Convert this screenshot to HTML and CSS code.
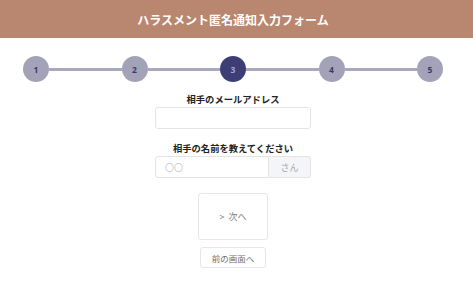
FILE: index.html
```html
<!DOCTYPE html>
<html lang="ja">
<head>
  <meta charset="UTF-8" />
  <meta name="viewport" content="width=device-width, initial-scale=1.0"/>
  <title>ハラスメント匿名通知入力フォーム</title>
  <link rel="stylesheet" href="styles.css">
</head>
<body>

  <header class="site-header">
    <h1>ハラスメント匿名通知入力フォーム</h1>
  </header>

  <main class="page">
    <ol class="steps">
      <li class="step">1</li>
      <li class="bar"></li>
      <li class="step">2</li>
      <li class="bar"></li>
      <li class="step active">3</li>
      <li class="bar"></li>
      <li class="step">4</li>
      <li class="bar"></li>
      <li class="step">5</li>
    </ol>

    <form class="notice-form" onsubmit="return false">
      <div class="form-group">
        <label for="mail">相手のメールアドレス</label>
        <input type="text" id="mail" name="mail" />
      </div>

      <div class="form-group">
        <label for="name">相手の名前を教えてください</label>
        <div class="input-group">
          <input type="text" id="name" name="name" placeholder="〇〇" />
          <span class="addon">さん</span>
        </div>
      </div>

      <button type="submit" class="next-btn"><span class="chev">&gt;</span>次へ</button>
      <button type="button" class="back-btn">前の画面へ</button>
    </form>
  </main>

</body>
</html>
```

FILE: styles.css
```css
body {
  margin: 0;
  font-family: "Noto Sans CJK JP", "Noto Sans", sans-serif;
  background: #ffffff;
  color: #333;
}

.site-header {
  background: #b98770;
  height: 38px;
  display: flex;
  align-items: center;
  justify-content: center;
  padding-right: 7px;
}

.site-header h1 {
  margin: 0;
  color: #ffffff;
  font-size: 12px;
  font-weight: bold;
}

.page {
  padding-right: 7px;
}

/* ステップ表示 */
.steps {
  list-style: none;
  margin: 18px auto 0;
  padding: 0;
  width: 420px;
  display: flex;
  align-items: center;
}

.step {
  width: 26px;
  height: 26px;
  border-radius: 50%;
  background: #a4a2b9;
  color: #3a3a68;
  font-family: "Open Sans", sans-serif;
  font-size: 8.5px;
  font-weight: bold;
  display: flex;
  align-items: center;
  justify-content: center;
  flex-shrink: 0;
}

.step.active {
  background: #3e3e77;
  color: #a3a3cf;
}

.bar {
  flex: 1;
  height: 3px;
  background: #a9a8be;
}

/* フォーム */
.notice-form {
  width: 156px;
  margin: 11px auto 0;
}

.form-group {
  margin-bottom: 13px;
}

.form-group label {
  display: block;
  text-align: center;
  font-size: 9.3px;
  line-height: 12px;
  font-weight: bold;
  color: #222;
  margin-bottom: 2px;
}

.form-group input {
  display: block;
  width: 100%;
  min-width: 0;
  height: 22px;
  box-sizing: border-box;
  border: 1px solid #e4e4e4;
  border-radius: 3px;
  padding: 0 9px;
  font-family: inherit;
  font-size: 9px;
  outline: none;
}

.form-group input::placeholder {
  color: #c9c9c9;
}

.input-group {
  display: flex;
}

.input-group input {
  flex: 1;
  width: auto;
  border-radius: 3px 0 0 3px;
}

.addon {
  width: 42px;
  height: 22px;
  box-sizing: border-box;
  display: flex;
  align-items: center;
  justify-content: center;
  background: #f4f5f8;
  border: 1px solid #e4e4e4;
  border-left: none;
  border-radius: 0 3px 3px 0;
  color: #a9a9a9;
  font-size: 9px;
}

.next-btn,
.back-btn {
  display: block;
  margin: 0 auto;
  background: #ffffff;
  border: 1px solid #e6e6e6;
  border-radius: 3px;
  font-family: inherit;
  color: #808080;
  cursor: pointer;
}

.next-btn {
  width: 70px;
  height: 47px;
  margin-top: 15px;
  font-size: 9px;
}

.next-btn .chev {
  margin-right: 4px;
}

.back-btn {
  width: 66px;
  height: 21px;
  margin-top: 7px;
  font-size: 8.5px;
  color: #6f6f6f;
}
```
